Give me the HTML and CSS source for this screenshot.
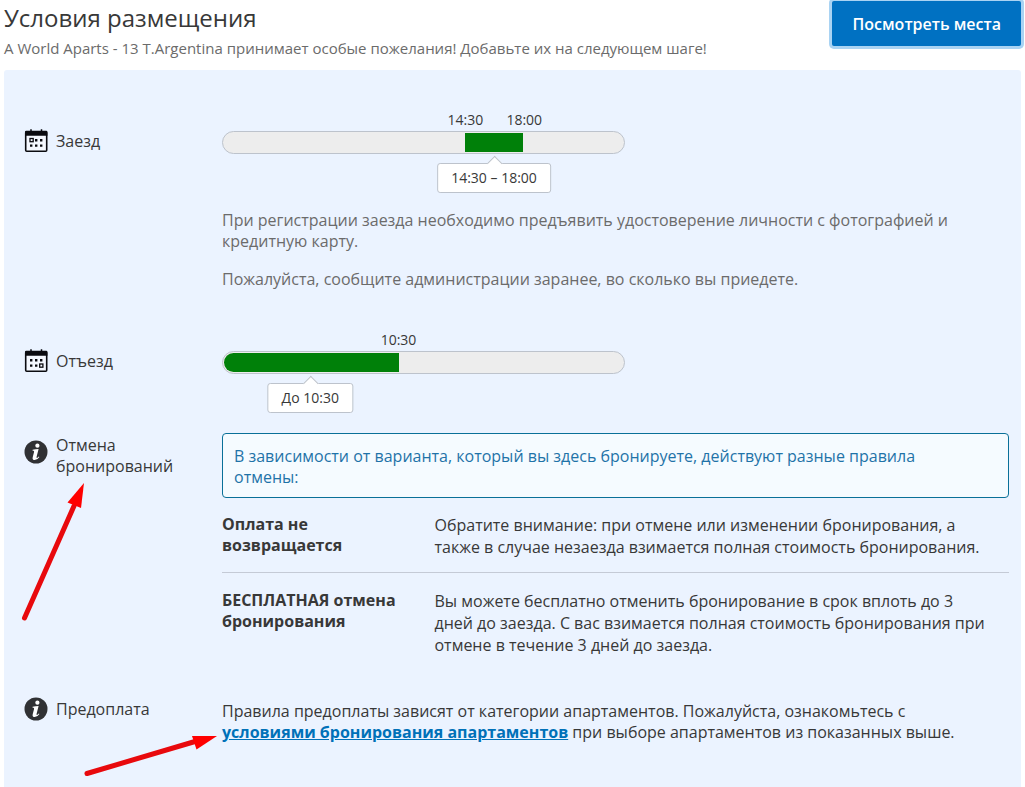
FILE: index.html
```html
<!DOCTYPE html>
<html lang="ru">
<head>
<meta charset="utf-8">
<meta name="viewport" content="width=device-width, initial-scale=1">
<title>Условия размещения</title>
<link rel="stylesheet" href="styles.css">
</head>
<body>
<header class="header">
  <div class="header-text">
    <h1 class="title">Условия размещения</h1>
    <p class="subtitle">A World Aparts - 13 T.Argentina принимает особые пожелания! Добавьте их на следующем шаге!</p>
  </div>
  <button class="cta" type="button">Посмотреть места</button>
</header>

<main class="panel">
  <section class="row row-checkin">
    <h2 class="label">
      <svg class="icon" viewBox="0 0 24 24" aria-hidden="true">
        <path d="M7 .3v3M17.500 .3v3" stroke="#0b0b10" stroke-width="1.500"/>
        <rect x="1.700" y="2.700" width="21" height="19.500" rx="1" fill="#f5f8ff" stroke="#0b0b10" stroke-width="1.600"/>
        <path d="M1 6.800V3q0-1.200 1.200-1.200h20q1.200 0 1.200 1.200v3.800z" fill="#0b0b10"/>
        <rect x="6" y="9.500" width="3.200" height="3.200" fill="none" stroke="#0b0b10" stroke-width="1.300"/>
        <path d="M11 10h2.400v2.400H11zM16 10h2.400v2.400H16zM6 15.400h2.400v2.400H6zM11 15.400h2.400v2.400H11zM16 15.400h2.400v2.400H16z" fill="#0b0b10"/>
      </svg>
      <span>Заезд</span>
    </h2>
    <div class="content">
      <div class="timebar">
        <span class="tick" style="left:60.4%">14:30</span>
        <span class="tick" style="left:75%">18:00</span>
        <div class="track"><div class="fill" style="margin-left:60.4%;width:14.6%"></div></div>
        <span class="tip" style="left:67.5%">14:30 – 18:00</span>
      </div>
      <div class="notes">
        <p class="note">При регистрации заезда необходимо предъявить удостоверение личности с фотографией и кредитную карту.</p>
        <p class="note">Пожалуйста, сообщите администрации заранее, во сколько вы приедете.</p>
      </div>
    </div>
  </section>

  <section class="row row-checkout">
    <h2 class="label">
      <svg class="icon" viewBox="0 0 24 24" aria-hidden="true">
        <path d="M7 .3v3M17.500 .3v3" stroke="#0b0b10" stroke-width="1.500"/>
        <rect x="1.700" y="2.700" width="21" height="19.500" rx="1" fill="#f5f8ff" stroke="#0b0b10" stroke-width="1.600"/>
        <path d="M1 6.800V3q0-1.200 1.200-1.200h20q1.200 0 1.200 1.200v3.800z" fill="#0b0b10"/>
        <path d="M6 10h2.400v2.400H6zM11 10h2.400v2.400H11zM16 10h2.400v2.400H16zM6 15.400h2.400v2.400H6zM11 15.400h2.400v2.400H11z" fill="#0b0b10"/>
        <rect x="15.700" y="15" width="3.200" height="3.200" fill="none" stroke="#0b0b10" stroke-width="1.300"/>
      </svg>
      <span>Отъезд</span>
    </h2>
    <div class="content">
      <div class="timebar">
        <span class="tick" style="left:43.8%">10:30</span>
        <div class="track"><div class="fill fill-start" style="width:43.8%"></div></div>
        <span class="tip" style="left:21.9%">До 10:30</span>
      </div>
    </div>
  </section>

  <section class="row row-cancel">
    <h2 class="label">
      <svg class="icon" viewBox="0 0 24 24" aria-hidden="true">
        <circle cx="12" cy="12" r="11.5" fill="#303134"/>
        <circle cx="13.4" cy="5.7" r="2.1" fill="#fff"/>
        <path d="M8.6 9.7q3-.3 6-.6l-2 7.7q-.3 1.2.4 1.1.7-.1 1.7-1.5l.7.5q-2.1 3.2-4.7 3.2-2.7 0-2-2.8l1.3-5q.4-1.4-.5-1.5l-1.1-.2z" fill="#fff"/>
      </svg>
      <span>Отмена бронирований</span>
    </h2>
    <svg class="arrow arrow-up" viewBox="0 0 64 140" aria-hidden="true">
      <path d="M4.500 137L54 25" stroke="#e8090d" stroke-width="5" stroke-linecap="round"/>
      <path d="M64 2L47.500 21.500 61 27z" fill="#f00"/>
    </svg>
    <div class="content">
      <p class="alert">В зависимости от варианта, который вы здесь бронируете, действуют разные правила <br>отмены:</p>
      <table class="policies">
        <tr>
          <th scope="row">Оплата не возвращается</th>
          <td>Обратите внимание: при отмене или изменении бронирования, а <br>также в случае незаезда взимается полная стоимость бронирования.</td>
        </tr>
        <tr>
          <th scope="row">БЕСПЛАТНАЯ отмена бронирования</th>
          <td>Вы можете бесплатно отменить бронирование в срок вплоть до 3 <br>дней до заезда. С вас взимается полная стоимость бронирования при <br>отмене в течение 3 дней до заезда.</td>
        </tr>
      </table>
    </div>
  </section>

  <section class="row row-prepay">
    <h2 class="label">
      <svg class="icon" viewBox="0 0 24 24" aria-hidden="true">
        <circle cx="12" cy="12" r="11.5" fill="#303134"/>
        <circle cx="13.4" cy="5.7" r="2.1" fill="#fff"/>
        <path d="M8.6 9.7q3-.3 6-.6l-2 7.7q-.3 1.2.4 1.1.7-.1 1.7-1.5l.7.5q-2.1 3.2-4.7 3.2-2.7 0-2-2.8l1.3-5q.4-1.4-.5-1.5l-1.1-.2z" fill="#fff"/>
      </svg>
      <span>Предоплата</span>
    </h2>
    <svg class="arrow arrow-right" viewBox="0 0 136 44" aria-hidden="true">
      <path d="M4 39.500L112 7.500" stroke="#e8090d" stroke-width="5" stroke-linecap="round"/>
      <path d="M134 2L109 2 113.500 15.500z" fill="#f00"/>
    </svg>
    <div class="content">
      <p class="prepay">Правила предоплаты зависят от категории апартаментов. Пожалуйста, ознакомьтесь с <br><a href="#rooms">условиями бронирования апартаментов</a> при выборе апартаментов из показанных выше.</p>
    </div>
  </section>
</main>
</body>
</html>
```

FILE: styles.css
```css
* {
  box-sizing: border-box;
}

body {
  margin: 0;
  background: #fff;
  color: #383838;
  font-family: "Open Sans", "Noto Sans", sans-serif;
  font-size: 16px;
  line-height: 21px;
}

h1,
h2,
p {
  margin: 0;
  font-weight: 400;
}

.header {
  display: flex;
  justify-content: space-between;
  align-items: flex-start;
  padding: 1px 4px 11px;
}

.title {
  font-size: 24px;
  line-height: 34px;
}

.subtitle {
  padding-top: 2px;
  color: #6b6b6b;
  font-size: 15px;
  line-height: 22px;
}

.cta {
  padding: 12px 20px 10px;
  border: 0;
  border-radius: 2px;
  background: #0071c2;
  box-shadow: 0 0 0 3px #a9d3f3;
  color: #fff;
  font-family: inherit;
  font-size: 16px;
  font-weight: 600;
  line-height: 23px;
}

.panel {
  min-height: calc(100vh - 70px);
  margin: 0 4px;
  padding: 60px 12px 40px 20px;
  border-radius: 3px 3px 0 0;
  background: #ebf3ff;
}

.row {
  position: relative;
  display: grid;
  grid-template-columns: 186px minmax(0, 1fr);
  column-gap: 12px;
}

.row-checkin {
  padding-bottom: 60px;
}

.row-checkout {
  padding-bottom: 59px;
}

.row-cancel {
  padding-bottom: 28px;
}

.label {
  display: flex;
  align-items: flex-start;
  gap: 8px;
  padding-top: 1px;
  font-size: 16px;
}

.icon {
  flex: none;
  width: 24px;
  height: 24px;
  margin-top: -2px;
}

.row-cancel .label {
  padding-top: 2px;
}

.row-cancel .icon {
  margin-top: 5px;
}

.timebar {
  position: relative;
  max-width: 403px;
  padding-top: 1px;
}

.track {
  height: 23px;
  overflow: hidden;
  padding: 1px;
  border: 1px solid #bdc3cc;
  border-radius: 12px;
  background: #ededed;
}

.fill {
  height: 100%;
  background: #008009;
}

.fill-start {
  border-radius: 10px 0 0 10px;
}

.tick {
  position: absolute;
  bottom: 100%;
  transform: translateX(-50%);
  font-size: 14px;
  line-height: 20px;
}

.tip {
  position: absolute;
  top: 33px;
  padding: 4px 13px;
  border: 1px solid #bdc3cc;
  border-radius: 3px;
  background: #fff;
  transform: translateX(-50%);
  font-size: 14px;
  line-height: 20px;
  white-space: nowrap;
}

.tip::before {
  content: "";
  position: absolute;
  top: -6px;
  left: calc(50% - 5px);
  width: 10px;
  height: 10px;
  border: 1px solid #bdc3cc;
  border-right: 0;
  border-bottom: 0;
  background: #fff;
  transform: rotate(45deg);
}

.notes {
  display: grid;
  gap: 17px;
  padding-top: 56px;
  color: #6b6b6b;
}

.alert {
  padding: 12px 11px 9px;
  border: 1px solid #0a7098;
  border-radius: 4px;
  background: #f5fbff;
  color: #1f73a8;
}

.policies {
  width: 100%;
  margin-top: 4px;
  border-collapse: collapse;
}

.policies th,
.policies td {
  padding: 12px 0 14px;
  text-align: left;
  vertical-align: top;
}

.policies td {
  line-height: 22px;
}

.policies tr + tr th,
.policies tr + tr td {
  padding-top: 17px;
  border-top: 1px solid #c4cad6;
}

.policies th {
  width: 27%;
  padding-right: 20px;
  font-weight: 700;
}

.prepay {
  padding-top: 3px;
}

.prepay a {
  color: #0071b8;
  font-weight: 700;
}

.arrow {
  position: absolute;
  overflow: visible;
  fill: none;
}

.arrow-up {
  top: 48px;
  left: -4px;
  width: 64px;
  height: 140px;
}

.arrow-right {
  top: 36px;
  left: 59px;
  width: 136px;
  height: 44px;
}
```
